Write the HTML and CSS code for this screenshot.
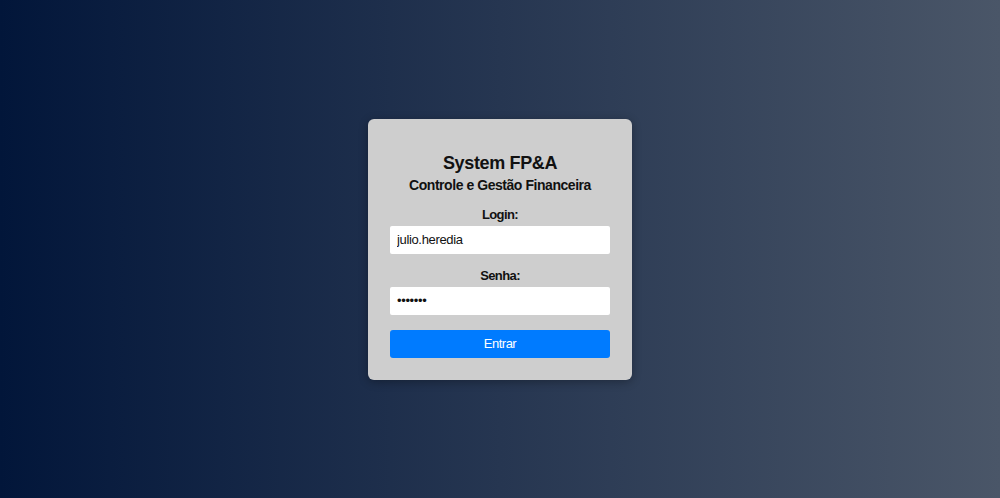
FILE: index.html
```html
<!DOCTYPE html>
<html lang="pt">
<head>
<meta charset="utf-8">
<title>System FP&amp;A</title>
<link rel="stylesheet" href="styles.css">
</head>
<body>
<main class="page">
  <form class="card">
    <h1 class="title">System FP&amp;A</h1>
    <h2 class="subtitle">Controle e Gestão Financeira</h2>
    <label class="label" for="login">Login:</label>
    <input class="field" id="login" type="text" value="julio.heredia">
    <label class="label" for="senha">Senha:</label>
    <input class="field" id="senha" type="password" value="1234567">
    <button class="btn" type="button">Entrar</button>
  </form>
</main>
</body>
</html>
```
FILE: styles.css
```css
html, body {
  margin: 0;
  padding: 0;
  height: 100%;
}
body {
  font-family: "Liberation Sans", Arial, sans-serif;
  background: linear-gradient(to right, #02163a 0%, #4a5668 100%);
}
.page {
  height: 498px;
  display: flex;
  align-items: center;
  justify-content: center;
}
.card {
  width: 220px;
  padding: 34px 22px 22px;
  background: #cecece;
  border-radius: 6px;
  box-shadow: 0 2px 10px rgba(0,0,0,0.3);
  display: flex;
  flex-direction: column;
  text-align: center;
}
.title {
  margin: 0;
  font-size: 18px;
  line-height: 21px;
  letter-spacing: -0.35px;
  color: #111;
}
.subtitle {
  margin: 3px 0 0;
  font-size: 14px;
  line-height: 16px;
  letter-spacing: -0.45px;
  color: #111;
}
.label {
  margin-top: 14px;
  font-size: 13px;
  line-height: 15px;
  font-weight: bold;
  letter-spacing: -0.6px;
  color: #111;
}
.field {
  margin-top: 4px;
  height: 28px;
  box-sizing: border-box;
  border: none;
  border-radius: 2px;
  background: #fff;
  padding: 0 7px;
  font-family: "Liberation Sans", Arial, sans-serif;
  font-size: 13px;
  letter-spacing: -0.35px;
  color: #111;
}
.btn {
  margin-top: 15px;
  height: 28px;
  border: none;
  border-radius: 3px;
  background: #007bff;
  color: #fff;
  font-family: "Liberation Sans", Arial, sans-serif;
  font-size: 13px;
  letter-spacing: -0.5px;
}
```
